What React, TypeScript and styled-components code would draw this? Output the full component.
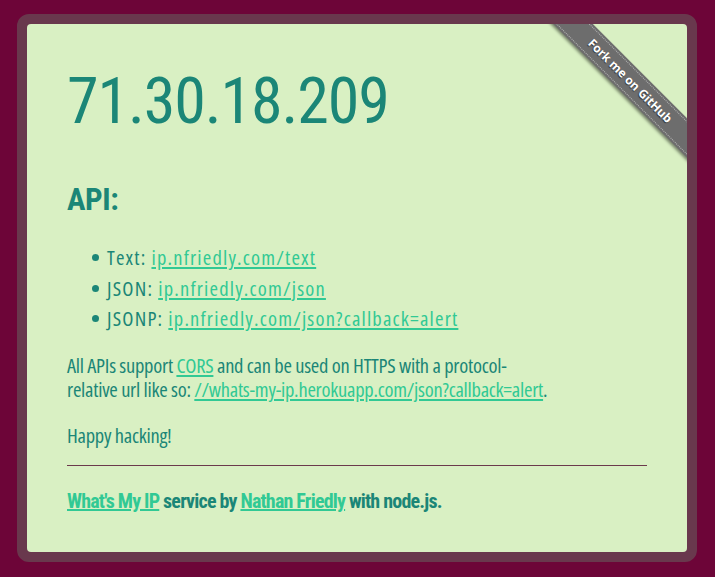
import React from "react";
import styled, { createGlobalStyle } from "styled-components";

const Global = createGlobalStyle`
  html, body {
    margin: 0;
    padding: 0;
    background: #6d0538;
    min-height: 100%;
  }
  body {
    font-family: "Open Sans", "Liberation Sans", sans-serif;
    font-stretch: 75%;
    font-weight: 500;
    color: #1b8677;
  }
`;

const Page = styled.div`
  padding: 14px 18px 15px 17px;
`;

const Card = styled.main`
  position: relative;
  width: 660px;
  border: 10px solid #69384d;
  border-radius: 12px;
  background: #69384d;
`;

const Inner = styled.div`
  position: relative;
  background: #d9f0c3;
  border-radius: 4px;
  padding: 46px 40px 40px;
  height: 528px;
  box-sizing: border-box;
  overflow: hidden;
`;

const Ip = styled.h1`
  margin: 0;
  font-family: Roboto, "Liberation Sans", sans-serif;
  font-size: 64px;
  line-height: 64px;
  font-weight: 400;
  font-stretch: 75%;
  letter-spacing: -1.1px;
`;

const SubTitle = styled.h2`
  margin: 50px 0 0;
  font-family: Roboto, "Liberation Sans", sans-serif;
  font-size: 31px;
  line-height: 31px;
  font-weight: 700;
  font-stretch: 75%;
  letter-spacing: -0.4px;
`;

const List = styled.ul`
  margin: 27px 0 0;
  padding: 0 0 0 40px;
  list-style: none;
`;

const Item = styled.li`
  position: relative;
  font-size: 20.5px;
  line-height: 30.5px;
  letter-spacing: 1.2px;
  &::before {
    content: "";
    position: absolute;
    left: -15px;
    top: 12px;
    width: 7px;
    height: 7px;
    border-radius: 50%;
    background: #1b8677;
  }
`;

const Link = styled.a`
  color: #31c994;
  text-decoration: underline;
`;

const Para = styled.p<{ $gap: number }>`
  margin: ${(p) => p.$gap}px 0 0;
  max-width: 485px;
  font-size: 20.5px;
  line-height: 24.4px;
  letter-spacing: -0.25px;
`;

const Rule = styled.hr`
  margin: 17px 0 0;
  border: none;
  border-top: 1px solid #6b3a4c;
  height: 0;
`;

const Footer = styled.p`
  margin: 23px 0 0;
  font-family: Roboto, "Liberation Sans", sans-serif;
  font-size: 20px;
  line-height: 24.4px;
  font-weight: 700;
  font-stretch: 75%;
  letter-spacing: -0.8px;
`;

const RibbonCorner = styled.div`
  position: absolute;
  top: 0;
  right: 0;
  width: 150px;
  height: 150px;
  overflow: hidden;
  pointer-events: none;
`;

const Ribbon = styled.a`
  position: absolute;
  left: -17px;
  top: 43px;
  width: 220px;
  height: 28px;
  transform: rotate(45deg);
  background: #6d6d6d;
  box-shadow: 0 2px 3px rgba(0, 0, 0, 0.45);
  color: #fff;
  font-family: "Open Sans", "Liberation Sans", sans-serif;
  font-stretch: 100%;
  font-weight: 700;
  font-size: 12px;
  line-height: 28px;
  text-align: center;
  text-decoration: none;
  text-shadow: 0 1px 1px rgba(0, 0, 0, 0.6);
  &::before,
  &::after {
    content: "";
    position: absolute;
    left: 0;
    right: 0;
    height: 0;
    border-top: 1px dotted #b4b4b4;
  }
  &::before {
    top: 2px;
  }
  &::after {
    bottom: 2px;
  }
`;

export default function App() {
  return (
    <>
      <Global />
      <Page>
        <Card>
          <Inner>
            <Ip>71.30.18.209</Ip>
            <SubTitle>API:</SubTitle>
            <List>
              <Item>
                Text: <Link href="#">ip.nfriedly.com/text</Link>
              </Item>
              <Item>
                JSON: <Link href="#">ip.nfriedly.com/json</Link>
              </Item>
              <Item>
                JSONP: <Link href="#">ip.nfriedly.com/json?callback=alert</Link>
              </Item>
            </List>
            <Para $gap={19}>
              All APIs support <Link href="#">CORS</Link> and can be used on HTTPS with a
              protocol-relative url like so:{" "}
              <Link href="#">//whats-my-ip.herokuapp.com/json?callback=alert</Link>.
            </Para>
            <Para $gap={22}>Happy hacking!</Para>
            <Rule />
            <Footer>
              <Link href="#">What's My IP</Link> service by{" "}
              <Link href="#">Nathan Friedly</Link> with node.js.
            </Footer>
            <RibbonCorner>
              <Ribbon href="#">Fork me on GitHub</Ribbon>
            </RibbonCorner>
          </Inner>
        </Card>
      </Page>
    </>
  );
}
